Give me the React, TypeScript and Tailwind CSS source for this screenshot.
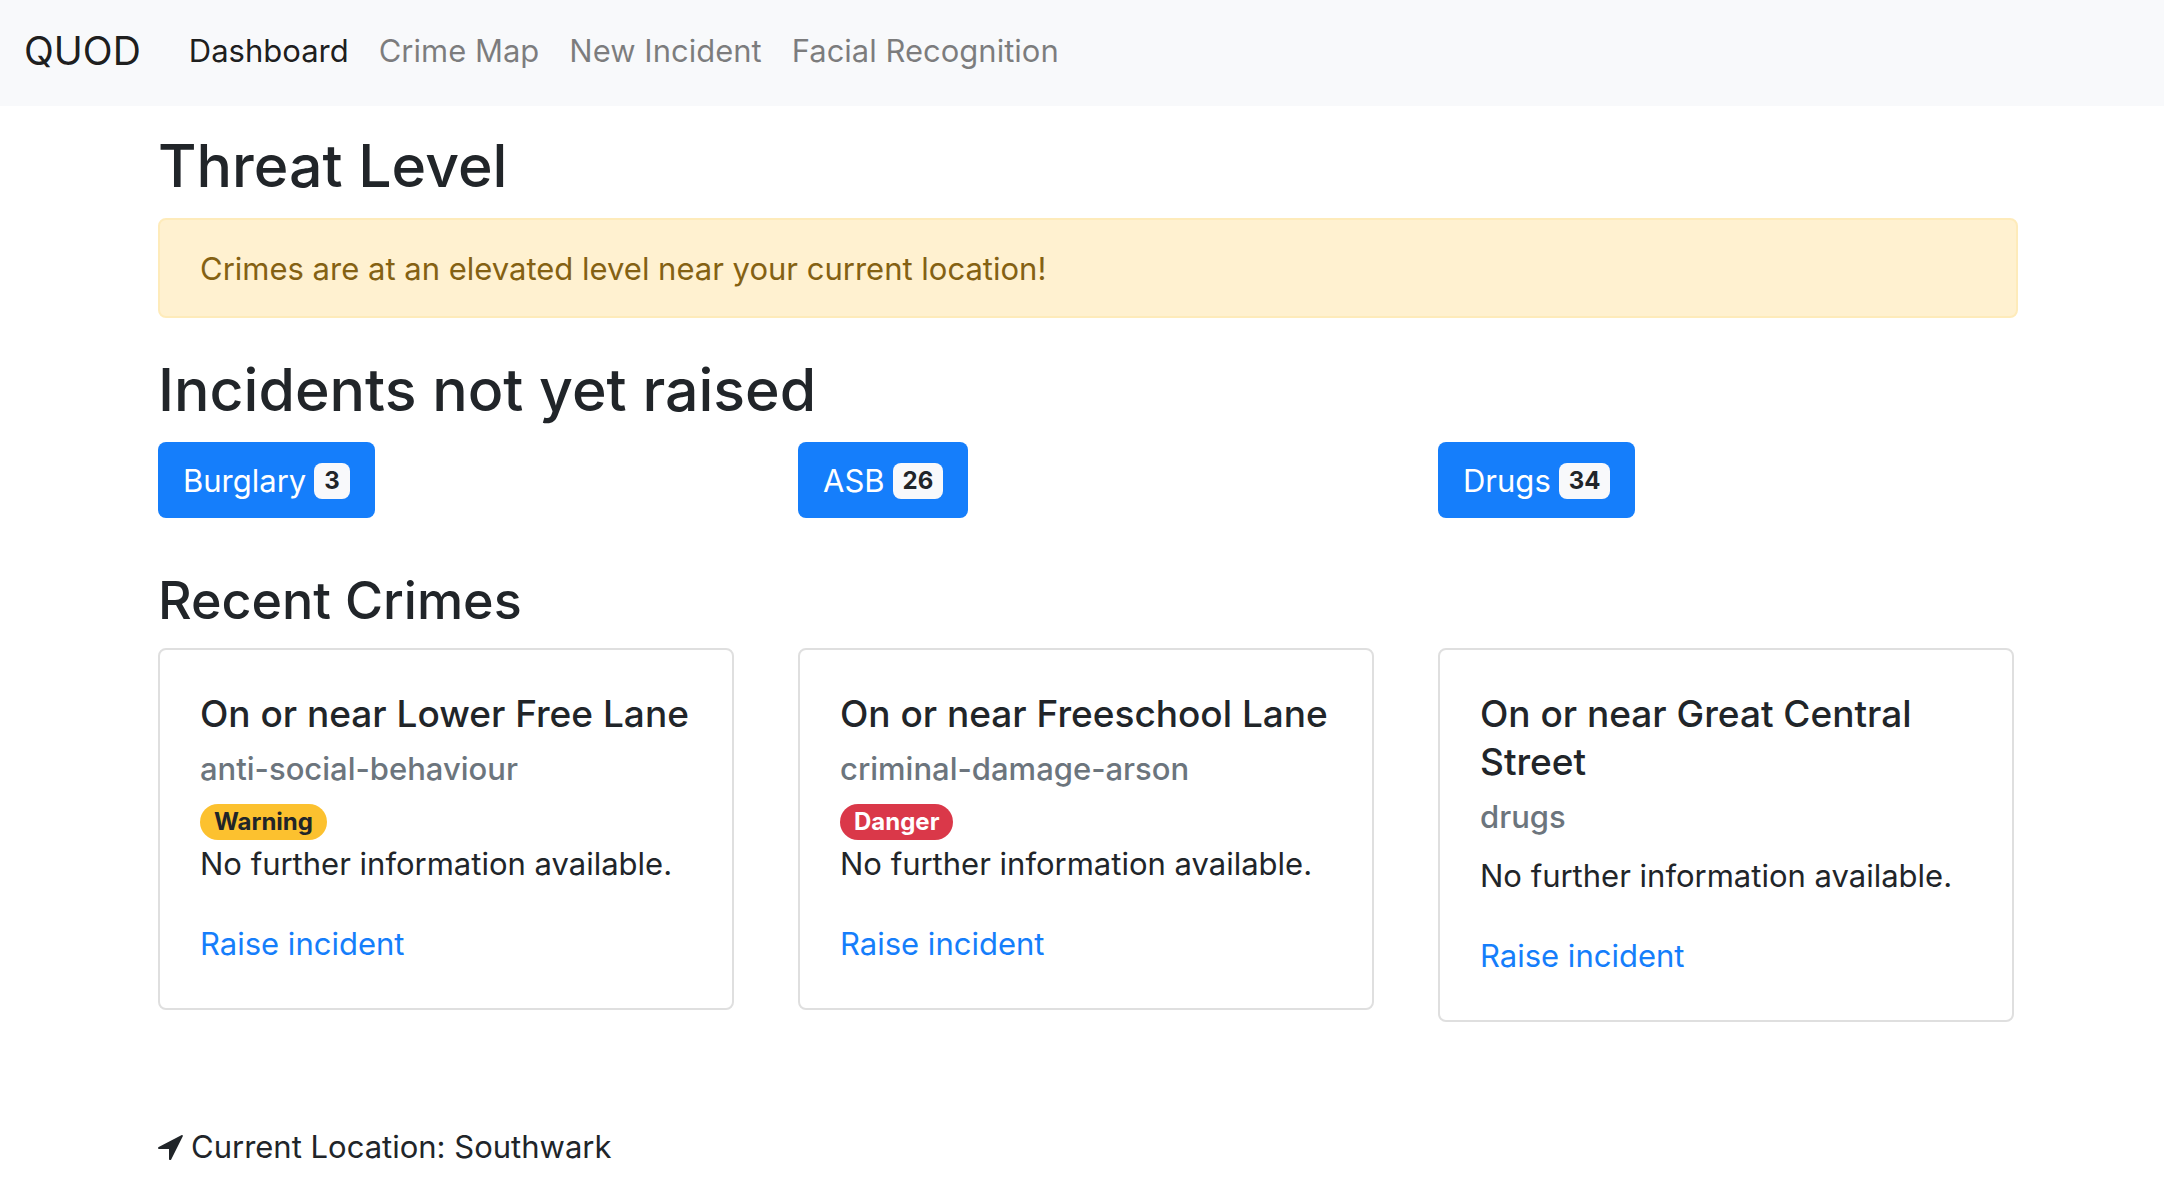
const navItems = ["Dashboard", "Crime Map", "New Incident", "Facial Recognition"];

const categories = [
  { name: "Burglary", count: 3 },
  { name: "ASB", count: 26 },
  { name: "Drugs", count: 34 },
];

type Crime = { title: string; kind: string; level?: "Warning" | "Danger" };

const crimes: Crime[] = [
  { title: "On or near Lower Free Lane", kind: "anti-social-behaviour", level: "Warning" },
  { title: "On or near Freeschool Lane", kind: "criminal-damage-arson", level: "Danger" },
  { title: "On or near Great Central Street", kind: "drugs" },
];

const levelStyles = {
  Warning: "bg-[#fcc12f] text-[#212529]",
  Danger: "bg-[#da3849] text-white",
};

function Navbar() {
  return (
    <nav className="flex items-center bg-[#f8f9fb] px-6 pt-[11px] pb-[15px]">
      <a href="#" className="mr-12 text-[39px] leading-[80px] text-black/90">
        QUOD
      </a>
      <ul className="flex gap-[30px]">
        {navItems.map((item, i) => (
          <li key={item}>
            <a href="#" className={i === 0 ? "text-black/90" : "text-black/50"}>
              {item}
            </a>
          </li>
        ))}
      </ul>
    </nav>
  );
}

function CrimeCard({ title, kind, level }: Crime) {
  return (
    <article className="max-w-[576px] rounded-lg border-2 border-[#dfdfdf] bg-white p-10">
      <h4 className="mb-3 text-[37px] leading-[48px] font-medium">{title}</h4>
      <h5 className="mb-4 leading-[38px] font-medium text-[#6c757d]">{kind}</h5>
      {level && (
        <span className={`flex h-9 w-fit items-center rounded-full px-[14px] text-2xl font-bold ${levelStyles[level]}`}>
          {level}
        </span>
      )}
      <p className="mb-8">No further information available.</p>
      <a href="#" className="block w-fit text-[#157efb]">
        Raise incident
      </a>
    </article>
  );
}

export default function App() {
  return (
    <div className="min-h-screen bg-white font-['Inter',sans-serif] text-[31px] leading-[48px] text-[#212529]">
      <Navbar />
      <main className="pl-3">
        <div className="mx-auto max-w-[1920px] px-[30px] pt-5">
          <h2 className="mb-3 text-[59px] leading-[80px] font-medium">Threat Level</h2>
          <div role="alert" className="mb-8 rounded-lg border-2 border-[#feebba] bg-[#fff1d0] px-10 pt-[25px] pb-[23px] text-[#846113]">
            Crimes are at an elevated level near your current location!
          </div>

          <h2 className="mb-3 text-[59px] leading-[80px] font-medium">Incidents not yet raised</h2>
          <div className="mb-12 grid grid-cols-3 gap-[60px]">
            {categories.map(({ name, count }) => (
              <button
                key={name}
                type="button"
                className="flex w-fit items-center gap-2 rounded-lg bg-[#157efb] px-[25px] pt-[15px] pb-[13px] text-white"
              >
                {name}
                <span className="flex h-9 items-center rounded-lg bg-[#f8f9fb] px-[10px] text-2xl font-bold text-[#212529]">
                  {count}
                </span>
              </button>
            ))}
          </div>

          <h3 className="mb-3 text-[52px] leading-[70px] font-medium">Recent Crimes</h3>
          <div className="mb-[101px] grid grid-cols-3 items-start gap-[60px]">
            {crimes.map((crime) => (
              <CrimeCard key={crime.title} {...crime} />
            ))}
          </div>

          <p className="flex items-center gap-2">
            <svg viewBox="0 0 25 25" className="size-[25px]" fill="currentColor" aria-hidden="true">
              <path d="M23.8 0.1 Q25.2 0 24.8 1.3 L13.2 24.4 Q12.6 25.2 11.7 24.9 Q11 24.7 11 23.9 L11 14 L1 14 Q0.2 13.9 0 13.2 Q-0.1 12.4 0.7 11.9 Z" />
            </svg>
            Current Location: Southwark
          </p>
        </div>
      </main>
    </div>
  );
}
